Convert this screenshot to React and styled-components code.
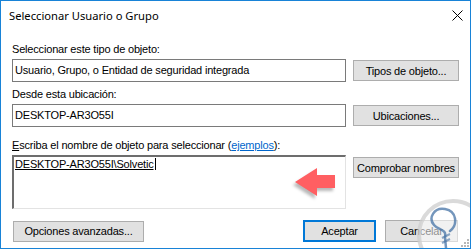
import React from 'react'
import styled, { createGlobalStyle } from 'styled-components'

const GlobalStyle = createGlobalStyle`
  body {
    margin: 0;
    background: #ffffff;
    font-family: "Liberation Sans", Arial, sans-serif;
  }
`

const Window = styled.div`
  position: relative;
  width: 471px;
  height: 249px;
  box-sizing: border-box;
  border: 1px solid #1883d7;
  background: #ffffff;
  overflow: hidden;
  letter-spacing: -0.18px;
`

const TitleBar = styled.div`
  height: 29px;
  display: flex;
  align-items: center;
  justify-content: space-between;
  padding-left: 8px;
`

const Title = styled.span`
  font-family: "Noto Sans", "Open Sans", sans-serif;
  font-size: 11.2px;
  letter-spacing: 0;
  color: #000;
`

const CloseIcon = styled.svg`
  width: 11px;
  height: 11px;
  margin-right: 7px;
`

const Content = styled.div`
  display: grid;
  grid-template-columns: 334px 106px;
  column-gap: 7px;
  padding: 13px 0 0 11px;
`

const Label = styled.div`
  grid-column: 1 / -1;
  height: 13px;
  line-height: 13px;
  font-size: 11px;
  color: #000;
  margin-top: ${p => p.$gap || 0}px;
  margin-bottom: 3px;
  u { text-decoration: underline; }
`

const Link = styled.span`
  color: #0066cc;
  text-decoration: underline;
`

const Field = styled.div`
  box-sizing: border-box;
  height: 23px;
  border: 1px solid #7a7a7a;
  padding: 0 2px;
  font-size: 11px;
  line-height: 21px;
  color: #000;
  white-space: nowrap;
  overflow: hidden;
`

const NameBox = styled.div`
  box-sizing: border-box;
  height: 54px;
  border-top: 2px solid #6d6d6d;
  border-left: 2px solid #6d6d6d;
  border-right: 1px solid #e3e3e3;
  border-bottom: 1px solid #e3e3e3;
  padding: 1px 1px;
  font-size: 11px;
  line-height: 13px;
`

const Resolved = styled.span`
  text-decoration: underline;
  border-right: 1px solid #000;
  padding-right: 1px;
`

const Button = styled.button`
  box-sizing: border-box;
  height: ${p => p.$h || 21}px;
  width: ${p => (p.$w ? `${p.$w}px` : '100%')};
  background: #e1e1e1;
  border: ${p => (p.$default ? '2px solid #0078d7' : '1px solid #adadad')};
  font-family: "Liberation Sans", Arial, sans-serif;
  font-size: 11px;
  letter-spacing: -0.18px;
  color: #000;
  padding: 0;
  margin: 0;
  align-self: ${p => p.$align || 'center'};
  margin-top: ${p => p.$mt || 0}px;
`

const Footer = styled.div`
  display: flex;
  align-items: center;
  gap: 9px;
  padding: 0 12px 0 12px;
  margin-top: 11px;
`

const Spacer = styled.div`
  flex: 1;
`

const Arrow = styled.svg`
  position: absolute;
  left: 287px;
  top: 163px;
  width: 52px;
  height: 38px;
  filter: drop-shadow(-2px 3px 1.5px rgba(0, 0, 0, 0.28));
`

const Watermark = styled.svg`
  position: absolute;
  left: 411px;
  top: 197px;
  width: 70px;
  height: 70px;
`

const Grip = styled.svg`
  position: absolute;
  left: 459px;
  top: 237px;
  width: 10px;
  height: 10px;
`

export default function App() {
  return (
    <>
      <GlobalStyle />
      <Window>
        <TitleBar>
          <Title>Seleccionar Usuario o Grupo</Title>
          <CloseIcon viewBox="0 0 11 11">
            <path d="M0.5 0.5 L10.5 10.5 M10.5 0.5 L0.5 10.5" stroke="#000" strokeWidth="1" />
          </CloseIcon>
        </TitleBar>
        <Content>
          <Label>Seleccionar este tipo de objeto:</Label>
          <Field>Usuario, Grupo, o Entidad de seguridad integrada</Field>
          <Button>Tipos de objeto...</Button>

          <Label $gap={6}>Desde esta ubicación:</Label>
          <Field>DESKTOP-AR3O55I</Field>
          <Button>Ubicaciones...</Button>

          <Label $gap={12}>
            <u>E</u>scriba el nombre de objeto para seleccionar (<Link>ejemplos</Link>):
          </Label>
          <NameBox>
            <Resolved>DESKTOP-AR3O55I\Solvetic</Resolved>
          </NameBox>
          <Button $align="start" $mt={2}>Comprobar nombres</Button>
        </Content>
        <Footer>
          <Button $w={131} $h={21}>Opciones avanzadas...</Button>
          <Spacer />
          <Button $w={73} $h={22} $default>Aceptar</Button>
          <Button $w={73} $h={22}>Cancelar</Button>
        </Footer>

        <Arrow viewBox="0 0 52 38">
          <path d="M7 18 L29 4 L29 11 L47 11 L47 24 L29 24 L29 32 Z" fill="#ff5f62" />
        </Arrow>

        <Watermark viewBox="0 0 70 70">
          <circle cx="41" cy="37" r="34" fill="rgba(255,255,255,0.55)" stroke="rgba(205,205,205,0.75)" strokeWidth="4" />
          <path
            d="M38 33 C46 27 45 13 33 11 C22 9 16 20 22 27 C26 32 35 31 33 39 L34 50"
            fill="none"
            stroke="rgba(70,115,165,0.75)"
            strokeWidth="2.5"
            strokeLinecap="round"
          />
          <path d="M30 40 L38 36 M30 45 L38 41" stroke="rgba(70,115,165,0.6)" strokeWidth="2" />
        </Watermark>

        <Grip viewBox="0 0 10 10">
          <rect x="7" y="1" width="2" height="2" fill="#b8b8b8" />
          <rect x="4" y="4" width="2" height="2" fill="#b8b8b8" />
          <rect x="7" y="4" width="2" height="2" fill="#b8b8b8" />
          <rect x="1" y="7" width="2" height="2" fill="#b8b8b8" />
          <rect x="4" y="7" width="2" height="2" fill="#b8b8b8" />
          <rect x="7" y="7" width="2" height="2" fill="#b8b8b8" />
        </Grip>
      </Window>
    </>
  )
}
